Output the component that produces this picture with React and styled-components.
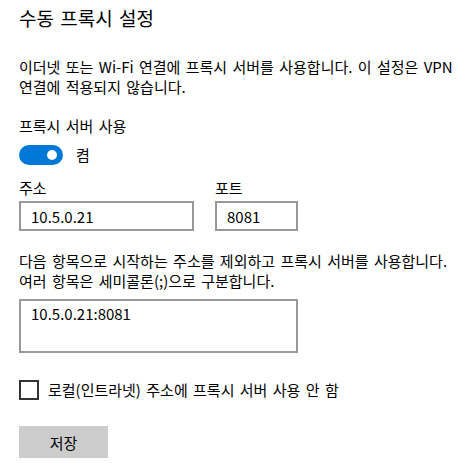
import React, { useState } from "react";
import styled, { createGlobalStyle } from "styled-components";

const GlobalStyle = createGlobalStyle`
  html, body {
    margin: 0;
    padding: 0;
    background: #ffffff;
  }
  body {
    font-family: "Noto Sans CJK KR", "Noto Sans", sans-serif;
    color: #000000;
  }
`;

const Page = styled.div`
  width: 472px;
  height: 476px;
  padding: 4px 0 0 19px;
  box-sizing: border-box;
  display: flex;
  flex-direction: column;
  align-items: flex-start;
  overflow: hidden;
`;

const Title = styled.h1`
  margin: 0;
  font-size: 19px;
  font-weight: 400;
  line-height: 28px;
  word-spacing: 2px;
`;

const Text = styled.p`
  margin: ${(p) => p.$top || 0}px 0 0;
  font-size: 15px;
  line-height: 20px;
  word-spacing: 2px;
  white-space: nowrap;
`;

const ToggleRow = styled.label`
  margin-top: 9px;
  display: flex;
  align-items: center;
  gap: 13px;
  font-size: 15px;
  line-height: 20px;
  cursor: pointer;
`;

const Track = styled.span`
  width: 44px;
  height: 20px;
  border-radius: 10px;
  box-sizing: border-box;
  background: ${(p) => (p.$on ? "#0078d7" : "#ffffff")};
  border: 2px solid ${(p) => (p.$on ? "#0078d7" : "#333333")};
  display: flex;
  align-items: center;
  justify-content: ${(p) => (p.$on ? "flex-end" : "flex-start")};
  padding: 0 4px;
`;

const Knob = styled.span`
  width: 10px;
  height: 10px;
  border-radius: 50%;
  background: ${(p) => (p.$on ? "#ffffff" : "#333333")};
`;

const FieldRow = styled.div`
  margin-top: 13px;
  display: flex;
  gap: 21px;
`;

const Field = styled.div`
  display: flex;
  flex-direction: column;
  gap: 3px;
`;

const Label = styled.span`
  font-size: 15px;
  line-height: 20px;
`;

const Input = styled.input`
  width: ${(p) => p.$w}px;
  height: 30px;
  box-sizing: border-box;
  border: 2px solid #999999;
  padding: 0 10px;
  font-family: inherit;
  font-size: 15px;
  color: #000000;
  outline: none;
`;

const Area = styled.textarea`
  margin-top: 8px;
  width: 279px;
  height: 54px;
  box-sizing: border-box;
  border: 2px solid #999999;
  padding: 3px 10px;
  font-family: inherit;
  font-size: 15px;
  line-height: 20px;
  color: #000000;
  resize: none;
  outline: none;
`;

const CheckRow = styled.label`
  margin-top: 27px;
  display: flex;
  align-items: center;
  gap: 9px;
  font-size: 15px;
  line-height: 20px;
  word-spacing: 2px;
  cursor: pointer;
`;

const Box = styled.span`
  width: 20px;
  height: 20px;
  box-sizing: border-box;
  border: 2px solid #333333;
  background: #ffffff;
`;

const Button = styled.button`
  margin-top: 26px;
  width: 89px;
  height: 32px;
  border: none;
  background: #cccccc;
  font-family: inherit;
  font-size: 15px;
  color: #000000;
  cursor: pointer;
`;

export default function App() {
  const [on, setOn] = useState(true);
  const [checked, setChecked] = useState(false);

  return (
    <>
      <GlobalStyle />
      <Page>
        <Title>수동 프록시 설정</Title>
        <Text $top={25}>
          이더넷 또는 Wi-Fi 연결에 프록시 서버를 사용합니다. 이 설정은 VPN
          <br />
          연결에 적용되지 않습니다.
        </Text>
        <Text $top={19}>프록시 서버 사용</Text>
        <ToggleRow onClick={() => setOn(!on)}>
          <Track $on={on}>
            <Knob $on={on} />
          </Track>
          {on ? "켬" : "끔"}
        </ToggleRow>
        <FieldRow>
          <Field>
            <Label>주소</Label>
            <Input $w={175} defaultValue="10.5.0.21" />
          </Field>
          <Field>
            <Label>포트</Label>
            <Input $w={83} defaultValue="8081" />
          </Field>
        </FieldRow>
        <Text $top={20}>
          다음 항목으로 시작하는 주소를 제외하고 프록시 서버를 사용합니다.
          <br />
          여러 항목은 세미콜론(;)으로 구분합니다.
        </Text>
        <Area defaultValue="10.5.0.21:8081" />
        <CheckRow onClick={() => setChecked(!checked)}>
          <Box />
          로컬(인트라넷) 주소에 프록시 서버 사용 안 함
        </CheckRow>
        <Button>저장</Button>
      </Page>
    </>
  );
}
